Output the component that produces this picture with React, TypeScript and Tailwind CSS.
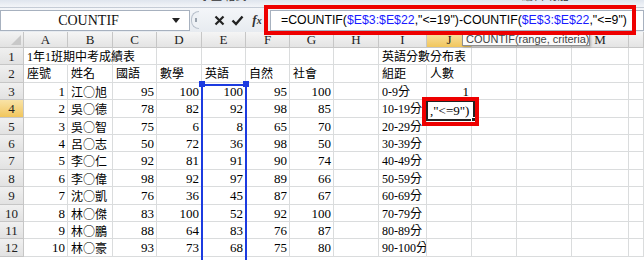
import React from 'react';

const cols = ['A', 'B', 'C', 'D', 'E', 'F', 'G', 'H', 'I', 'J', 'K', 'L', 'M', ''];
const widths = [44, 45, 44, 45, 44, 44, 44, 45, 48, 45, 45, 55, 57, 15];

type Row = (string | number)[];

const rows: Row[] = [
  ['1年1班期中考成績表', '', '', '', '', '', '', '', '英語分數分布表', '', '', '', '', ''],
  ['座號', '姓名', '國語', '數學', '英語', '自然', '社會', '', '組距', '人數', '', '', '', ''],
  [1, '江○旭', 95, 100, 100, 95, 100, '', '0-9分', 1, '', '', '', ''],
  [2, '吳○德', 78, 82, 92, 98, 85, '', '10-19分', '', '', '', '', ''],
  [3, '吳○智', 75, 6, 8, 65, 70, '', '20-29分', '', '', '', '', ''],
  [4, '呂○志', 50, 72, 36, 98, 50, '', '30-39分', '', '', '', '', ''],
  [5, '李○仁', 92, 81, 91, 90, 74, '', '40-49分', '', '', '', '', ''],
  [6, '李○偉', 98, 92, 97, 89, 66, '', '50-59分', '', '', '', '', ''],
  [7, '沈○凱', 76, 36, 45, 87, 67, '', '60-69分', '', '', '', '', ''],
  [8, '林○傑', 83, 100, 52, 92, 100, '', '70-79分', '', '', '', '', ''],
  [9, '林○鵬', 88, 64, 83, 76, 87, '', '80-89分', '', '', '', '', ''],
  [10, '林○豪', 93, 73, 68, 75, 80, '', '90-100分', '', '', '', '', ''],
];

const gridCols = `24px ${widths.map((w) => w + 'px').join(' ')}`;

const Ref = ({ children }: { children: React.ReactNode }) => (
  <span className="text-[#1a1aff]">{children}</span>
);

// names use the CJK face so the ○ gets its full-width form
const isName = (ci: number, ri: number) => ci === 1 && ri >= 2;

export default function App() {
  return (
    <div className="relative w-[644px] h-[260px] overflow-hidden bg-white font-['Liberation_Serif','Noto_Sans_CJK_TC',serif] text-[12px] text-black">
      {/* ribbon edge */}
      <div className="h-[8px] bg-gradient-to-b from-[#dfe5ee] to-[#f3f5f8] border-b border-[#c5ccd6] overflow-hidden flex text-[11px] text-[#333] font-['Noto_Sans_CJK_TC',sans-serif]">
        <div className="w-[200px]" />
        <div className="-mt-[13px] w-[322px]">字型 格式</div>
        <div className="-mt-[13px]">編輯 功能</div>
      </div>

      {/* formula bar */}
      <div className="h-[24px] flex items-center bg-gradient-to-b from-[#f4f6f9] to-[#e7ebf0]">
        <div className="w-[190px] h-[21px] bg-white border border-[#a7b1bf] flex items-center">
          <div className="flex-1 text-center text-[14px] text-[#111] pl-[4px]">COUNTIF</div>
          <svg width="8" height="5" viewBox="0 0 8 5" className="mr-[9px]">
            <path d="M0 0 L8 0 L4 5 Z" fill="#222" />
          </svg>
        </div>
        <div className="w-[8px] h-[18px] ml-[1px] rounded-l-full border border-r-0 border-[#b9c1cc] bg-[#eef1f5] flex items-center justify-center">
          <div className="w-[2px] h-[4px] bg-[#9aa3ae]" />
        </div>
        <div className="ml-[11px] w-[18px] flex justify-center">
          <svg width="11" height="11" viewBox="0 0 11 11">
            <path d="M1.5 1.5 L9.5 9.5 M9.5 1.5 L1.5 9.5" stroke="#222" strokeWidth="2.2" />
          </svg>
        </div>
        <div className="w-[18px] flex justify-center">
          <svg width="13" height="11" viewBox="0 0 13 11">
            <path d="M1.5 5.5 L5 9 L11.5 1.5" stroke="#222" strokeWidth="2.4" fill="none" />
          </svg>
        </div>
        <div className="w-[22px] text-center italic text-[13px] font-bold text-[#333]">
          f<span className="text-[10px]">x</span>
        </div>
        <div className="flex-1 h-[21px] ml-[2px] bg-white border border-[#a7b1bf] flex items-center pl-[10px] font-['Liberation_Sans',sans-serif] text-[12.3px] whitespace-nowrap overflow-hidden">
          =COUNTIF(<Ref>$E$3:$E$22</Ref>,"&lt;=19")-COUNTIF(<Ref>$E$3:$E$22</Ref>,"&lt;=9")
        </div>
      </div>

      {/* sheet */}
      <div className="grid" style={{ gridTemplateColumns: gridCols }}>
        <div className="h-[16px] bg-gradient-to-b from-[#f3f3f3] to-[#e2e2e2] border-r border-b border-[#c6c6c6] relative">
          <svg width="10" height="10" viewBox="0 0 10 10" className="absolute right-[2px] bottom-[2px]">
            <path d="M10 0 L10 10 L0 10 Z" fill="#c8c8c8" />
          </svg>
        </div>
        {cols.map((c, i) => (
          <div
            key={i}
            className={`h-[16px] border-r border-b border-[#c6c6c6] text-center text-[13px] leading-[16px] text-[#222] ${
              c === 'J' ? 'bg-gradient-to-b from-[#f9e3a6] to-[#f1c65b]' : 'bg-gradient-to-b from-[#f5f5f5] to-[#e4e4e4]'
            }`}
          >
            {c}
          </div>
        ))}
        {rows.map((r, ri) => (
          <React.Fragment key={ri}>
            <div
              className={`h-[17.4px] border-r border-b border-[#c6c6c6] text-center text-[13px] leading-[17px] text-[#222] ${
                ri === 3 ? 'bg-gradient-to-b from-[#f9e3a6] to-[#f1c65b]' : 'bg-gradient-to-b from-[#f0f0f0] to-[#e2e2e2]'
              }`}
            >
              {ri + 1}
            </div>
            {r.map((v, ci) => (
              <div
                key={ci}
                className={`h-[17.4px] border-r border-b border-[#dadcdd] whitespace-nowrap leading-[18px] ${
                  typeof v === 'number' ? 'text-right pr-[2px] text-[13px]' : 'pl-[3px]'
                } ${isName(ci, ri) ? "font-['Noto_Sans_CJK_TC',sans-serif] leading-[17px]" : ''} ${
                  ri === 0 && (ci === 0 || ci === 8) ? 'overflow-visible relative z-10 border-r-transparent' : 'overflow-hidden'
                }`}
              >
                {v}
              </div>
            ))}
          </React.Fragment>
        ))}
      </div>

      {/* selection on E3:E22 */}
      <div className="absolute left-[201px] top-[84px] w-[46px] h-[190px] border-2 border-[#1c3be0]" />
      <div className="absolute left-[199px] top-[81px] w-[6px] h-[6px] bg-[#1c3be0]" />
      <div className="absolute left-[243px] top-[81px] w-[6px] h-[6px] bg-[#1c3be0]" />

      {/* tooltip */}
      <div className="absolute left-[462px] top-[32px] w-[128px] h-[14px] bg-[#fbfbfb] border border-[#8f8f8f] shadow-[1px_1px_2px_rgba(0,0,0,0.25)] text-[11px] leading-[12px] pl-[3px] text-[#444] font-['Liberation_Sans',sans-serif] whitespace-nowrap overflow-hidden">
        COUNTIF(range, criteria)
      </div>

      {/* editing cell J4 */}
      <div className="absolute left-[426px] top-[100px] w-[49px] h-[21px] bg-white border-2 border-[#222] text-[13px] leading-[17px] pl-[2px] whitespace-nowrap">
        ,"&lt;=9")
        <div className="absolute -right-[3px] -bottom-[3px] w-[5px] h-[5px] bg-[#222] border border-white" />
      </div>

      {/* red annotations */}
      <div className="absolute left-[422px] top-[97px] w-[57px] h-[29px] border-[4px] border-[#ee0000]" />
      <div className="absolute left-[264px] top-[5px] w-[372px] h-[30px] border-[4px] border-[#ee0000]" />
    </div>
  );
}
